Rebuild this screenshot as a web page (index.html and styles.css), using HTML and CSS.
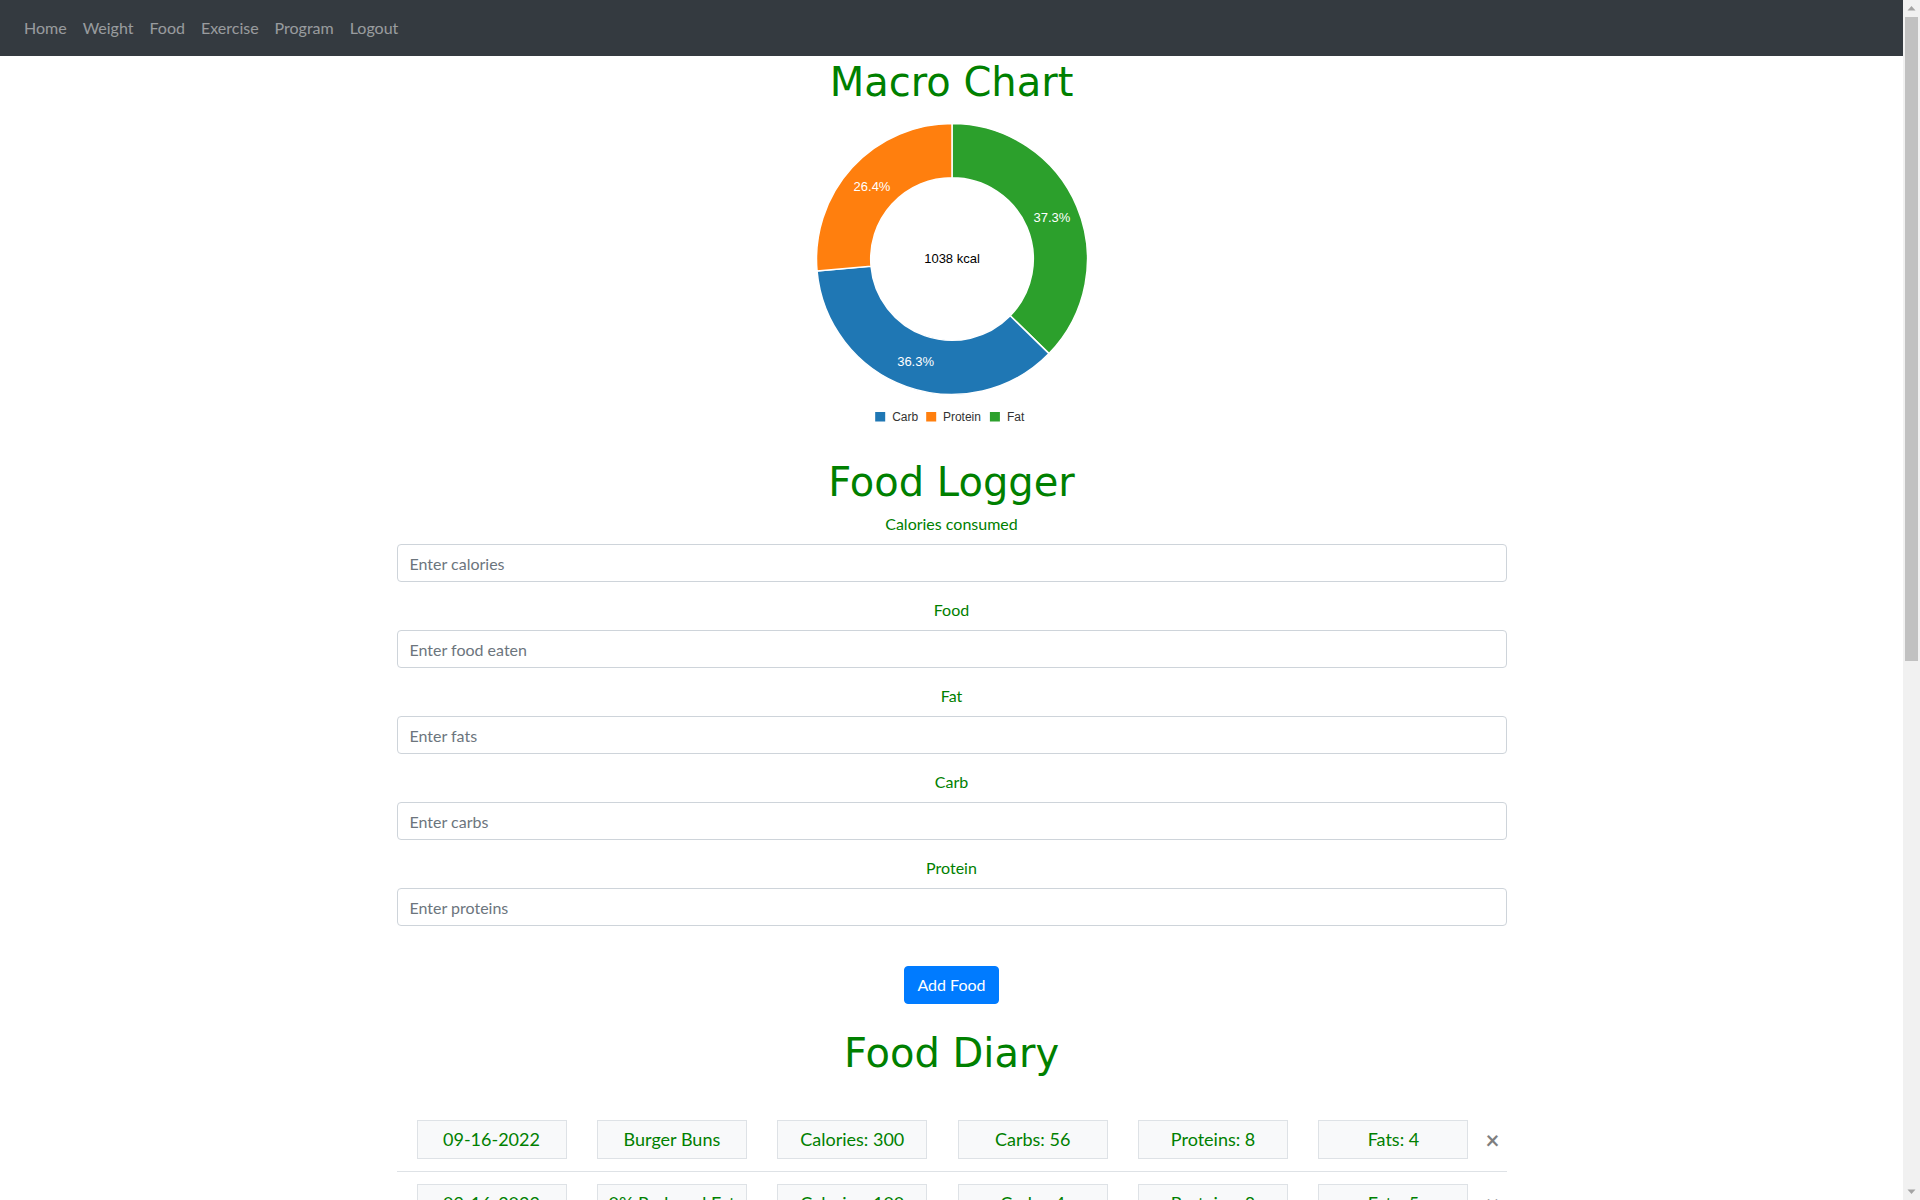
FILE: index.html
```html
<!DOCTYPE html>
<html lang="en">
<head>
<meta charset="utf-8">
<title>Food</title>
<link rel="stylesheet" href="styles.css">
</head>
<body>
<nav class="navbar">
  <ul class="nav">
    <li><a class="nav-link" href="#">Home</a></li>
    <li><a class="nav-link" href="#">Weight</a></li>
    <li><a class="nav-link" href="#">Food</a></li>
    <li><a class="nav-link" href="#">Exercise</a></li>
    <li><a class="nav-link" href="#">Program</a></li>
    <li><a class="nav-link" href="#">Logout</a></li>
  </ul>
</nav>

<main class="container">
  <h1 class="title">Macro Chart</h1>
  <div class="chart">
    <svg class="donut" width="300" height="344" viewBox="0 0 300 344">
      <path class="slice fat" d="M150,11.5 A135.5,135.5 0 0 1 247.02,241.59 L208.21,203.76 A81.3,81.3 0 0 0 150,65.7 Z"/>
      <path class="slice carb" d="M247.02,241.59 A135.5,135.5 0 0 1 15.03,158.9 L69.01,154.14 A81.3,81.3 0 0 0 208.21,203.76 Z"/>
      <path class="slice protein" d="M15.03,158.9 A135.5,135.5 0 0 1 150,11.5 L150,65.7 A81.3,81.3 0 0 0 69.01,154.14 Z"/>
      <text class="pct" x="249.9" y="105.3">37.3%</text>
      <text class="pct" x="113.6" y="249.6">36.3%</text>
      <text class="pct" x="70" y="74.2">26.4%</text>
      <text class="total" x="150" y="146.8">1038 kcal</text>
      <rect class="carb" x="73.2" y="300" width="10" height="9.5"/>
      <text class="legend" x="90.2" y="305">Carb</text>
      <rect class="protein" x="124.2" y="300" width="10" height="9.5"/>
      <text class="legend" x="140.9" y="305">Protein</text>
      <rect class="fat" x="187.9" y="300" width="10" height="9.5"/>
      <text class="legend" x="204.9" y="305">Fat</text>
    </svg>
  </div>

  <h1 class="title">Food Logger</h1>
  <form class="logger">
    <div class="form-group">
      <label class="field-label" for="cal">Calories consumed</label>
      <input class="form-control" id="cal" type="text" placeholder="Enter calories">
    </div>
    <div class="form-group">
      <label class="field-label" for="food">Food</label>
      <input class="form-control" id="food" type="text" placeholder="Enter food eaten">
    </div>
    <div class="form-group">
      <label class="field-label" for="fat">Fat</label>
      <input class="form-control" id="fat" type="text" placeholder="Enter fats">
    </div>
    <div class="form-group">
      <label class="field-label" for="carb">Carb</label>
      <input class="form-control" id="carb" type="text" placeholder="Enter carbs">
    </div>
    <div class="form-group">
      <label class="field-label" for="protein">Protein</label>
      <input class="form-control" id="protein" type="text" placeholder="Enter proteins">
    </div>
    <div class="actions">
      <button class="btn-primary" type="button">Add Food</button>
    </div>
  </form>

  <h1 class="title">Food Diary</h1>
  <ul class="diary">
    <li class="entry"><div class="cells"><span class="cell">09-16-2022</span><span class="cell">Burger Buns</span><span class="cell">Calories: 300</span><span class="cell">Carbs: 56</span><span class="cell">Proteins: 8</span><span class="cell">Fats: 4</span></div><button class="close" type="button">&times;</button></li>
    <li class="entry"><div class="cells"><span class="cell">09-16-2022</span><span class="cell">0% Reduced Fat</span><span class="cell">Calories: 100</span><span class="cell">Carbs: 4</span><span class="cell">Proteins: 8</span><span class="cell">Fats: 5</span></div><button class="close" type="button">&times;</button></li>
    <li class="entry"><div class="cells"><span class="cell">09-16-2022</span><span class="cell">Ground Beef</span><span class="cell">Calories: 400</span><span class="cell">Carbs: 0</span><span class="cell">Proteins: 40</span><span class="cell">Fats: 26</span></div><button class="close" type="button">&times;</button></li>
    <li class="entry"><div class="cells"><span class="cell">09-16-2022</span><span class="cell">Rice</span><span class="cell">Calories: 238</span><span class="cell">Carbs: 34</span><span class="cell">Proteins: 12</span><span class="cell">Fats: 8</span></div><button class="close" type="button">&times;</button></li>
    <li class="entry"><div class="cells"><span class="cell">09-15-2022</span><span class="cell">Oatmeal</span><span class="cell">Calories: 150</span><span class="cell">Carbs: 27</span><span class="cell">Proteins: 5</span><span class="cell">Fats: 3</span></div><button class="close" type="button">&times;</button></li>
    <li class="entry"><div class="cells"><span class="cell">09-15-2022</span><span class="cell">Banana</span><span class="cell">Calories: 105</span><span class="cell">Carbs: 27</span><span class="cell">Proteins: 1</span><span class="cell">Fats: 0</span></div><button class="close" type="button">&times;</button></li>
    <li class="entry"><div class="cells"><span class="cell">09-15-2022</span><span class="cell">Chicken Breast</span><span class="cell">Calories: 165</span><span class="cell">Carbs: 0</span><span class="cell">Proteins: 31</span><span class="cell">Fats: 4</span></div><button class="close" type="button">&times;</button></li>
    <li class="entry"><div class="cells"><span class="cell">09-15-2022</span><span class="cell">Eggs</span><span class="cell">Calories: 140</span><span class="cell">Carbs: 1</span><span class="cell">Proteins: 12</span><span class="cell">Fats: 10</span></div><button class="close" type="button">&times;</button></li>
    <li class="entry"><div class="cells"><span class="cell">09-14-2022</span><span class="cell">Greek Yogurt</span><span class="cell">Calories: 100</span><span class="cell">Carbs: 6</span><span class="cell">Proteins: 17</span><span class="cell">Fats: 0</span></div><button class="close" type="button">&times;</button></li>
    <li class="entry"><div class="cells"><span class="cell">09-14-2022</span><span class="cell">Almonds</span><span class="cell">Calories: 164</span><span class="cell">Carbs: 6</span><span class="cell">Proteins: 6</span><span class="cell">Fats: 14</span></div><button class="close" type="button">&times;</button></li>
    <li class="entry"><div class="cells"><span class="cell">09-14-2022</span><span class="cell">Pasta</span><span class="cell">Calories: 220</span><span class="cell">Carbs: 43</span><span class="cell">Proteins: 8</span><span class="cell">Fats: 1</span></div><button class="close" type="button">&times;</button></li>
    <li class="entry"><div class="cells"><span class="cell">09-14-2022</span><span class="cell">Apple</span><span class="cell">Calories: 95</span><span class="cell">Carbs: 25</span><span class="cell">Proteins: 0</span><span class="cell">Fats: 0</span></div><button class="close" type="button">&times;</button></li>
    <li class="entry"><div class="cells"><span class="cell">09-13-2022</span><span class="cell">Salmon</span><span class="cell">Calories: 208</span><span class="cell">Carbs: 0</span><span class="cell">Proteins: 20</span><span class="cell">Fats: 13</span></div><button class="close" type="button">&times;</button></li>
    <li class="entry"><div class="cells"><span class="cell">09-13-2022</span><span class="cell">Broccoli</span><span class="cell">Calories: 55</span><span class="cell">Carbs: 11</span><span class="cell">Proteins: 4</span><span class="cell">Fats: 1</span></div><button class="close" type="button">&times;</button></li>
    <li class="entry"><div class="cells"><span class="cell">09-13-2022</span><span class="cell">Whole Milk</span><span class="cell">Calories: 150</span><span class="cell">Carbs: 12</span><span class="cell">Proteins: 8</span><span class="cell">Fats: 8</span></div><button class="close" type="button">&times;</button></li>
    <li class="entry"><div class="cells"><span class="cell">09-13-2022</span><span class="cell">Peanut Butter</span><span class="cell">Calories: 190</span><span class="cell">Carbs: 7</span><span class="cell">Proteins: 7</span><span class="cell">Fats: 16</span></div><button class="close" type="button">&times;</button></li>
  </ul>
</main>

<div class="scrollbar" aria-hidden="true">
  <div class="sb-button">
    <svg width="17" height="17" viewBox="0 0 17 17"><path class="sb-arrow" d="M4.5,10.5 L12.5,10.5 L8.5,6 Z"/></svg>
  </div>
  <div class="sb-track">
    <div class="sb-thumb"></div>
  </div>
  <div class="sb-button">
    <svg width="17" height="17" viewBox="0 0 17 17"><path class="sb-arrow" d="M4.5,6.5 L12.5,6.5 L8.5,11 Z"/></svg>
  </div>
</div>
</body>
</html>
```

FILE: styles.css
```css
* {
  box-sizing: border-box;
}

html, body {
  margin: 0;
  padding: 0;
}

body {
  margin-right: 17px;
  font-family: "Segoe UI", Lato, "Liberation Sans", sans-serif;
  font-size: 16px;
  line-height: 1.5;
  color: #212529;
  background: #fff;
}

/* Simulated window scrollbar */
.scrollbar {
  position: fixed;
  top: 0;
  right: 0;
  width: 17px;
  height: 100vh;
  display: flex;
  flex-direction: column;
  background: #f1f1f1;
}

.sb-button {
  height: 17px;
  flex: none;
}

.sb-button svg {
  display: block;
}

.sb-arrow {
  fill: #a3a3a3;
}

.sb-track {
  flex: 1;
  padding: 0 2px;
}

.sb-thumb {
  height: 644px;
  background: #c1c1c1;
}

/* Navbar */
.navbar {
  background: #343a40;
  padding: 8px 16px;
}

.nav {
  display: flex;
  list-style: none;
  margin: 0;
  padding: 0;
}

.nav-link {
  display: block;
  padding: 8px;
  color: rgba(255, 255, 255, 0.5);
  text-decoration: none;
  line-height: 24px;
}

/* Container */
.container {
  max-width: 1140px;
  margin: 0 auto;
  padding: 0 15px 40px;
}

.title {
  font-family: Verdana, "DejaVu Sans", sans-serif;
  font-size: 40px;
  font-weight: normal;
  line-height: 48px;
  padding-top: 2px;
  margin: 0 0 6px;
  text-align: center;
  color: #008000;
}

/* Chart */
.chart {
  display: flex;
  justify-content: center;
}

.donut {
  display: block;
}

.slice {
  stroke: #fff;
  stroke-width: 1.5;
}

.fat { fill: #2ca02c; }
.carb { fill: #1f77b4; }
.protein { fill: #ff7f0e; }

.pct {
  font-family: "Liberation Sans", Arial, sans-serif;
  font-size: 13px;
  fill: #fff;
  text-anchor: middle;
  dominant-baseline: central;
}

.total {
  font-family: "Liberation Sans", Arial, sans-serif;
  font-size: 13px;
  fill: #000;
  text-anchor: middle;
  dominant-baseline: central;
}

.legend {
  font-family: "Liberation Sans", Arial, sans-serif;
  font-size: 12px;
  fill: #333;
  dominant-baseline: central;
}

/* Form */
.logger {
  margin: 0 0 23px;
}

.form-group {
  margin-bottom: 16px;
}

.field-label {
  display: block;
  text-align: center;
  color: #008000;
  margin-bottom: 8px;
  line-height: 24px;
}

.form-control {
  display: block;
  width: 100%;
  height: 38px;
  padding: 6px 12px;
  font-family: inherit;
  font-size: 16px;
  line-height: 24px;
  color: #495057;
  background: #fff;
  border: 1px solid #ced4da;
  border-radius: 4px;
}

.form-control::placeholder {
  color: #6c757d;
  opacity: 1;
}

.actions {
  padding-top: 24px;
  text-align: center;
}

.btn-primary {
  display: inline-block;
  font-family: inherit;
  font-size: 16px;
  line-height: 24px;
  padding: 6px 12px;
  color: #fff;
  background: #007bff;
  border: 1px solid #007bff;
  border-radius: 4px;
}

/* Diary */
.diary {
  list-style: none;
  margin: 31px 0 0;
  padding: 0;
}

.entry {
  display: flex;
  align-items: center;
  padding: 12px 0 12px 20px;
  border-bottom: 1px solid #dee2e6;
}

.cells {
  display: flex;
  gap: 30.4px;
}

.cell {
  width: 150px;
  padding: 5px 0;
  font-size: 18px;
  line-height: 27px;
  text-align: center;
  white-space: nowrap;
  color: #008000;
  background: #f8f9fa;
  border: 1px solid #dee2e6;
}

.close {
  margin-left: 17px;
  padding: 0;
  background: none;
  border: 0;
  font-family: inherit;
  font-size: 24px;
  font-weight: 700;
  line-height: 1;
  color: #000;
  opacity: 0.5;
  text-shadow: 0 1px 0 #fff;
}
```
